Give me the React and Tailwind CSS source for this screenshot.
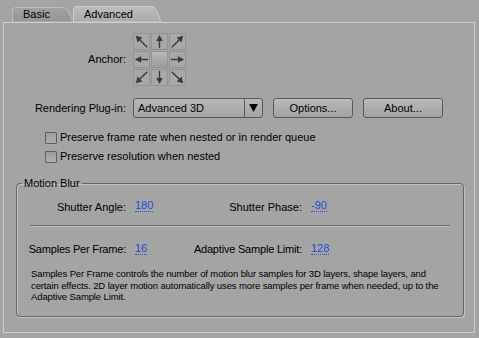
import React from "react";

function Arrow({ rot }) {
  return (
    <svg width="17" height="17" viewBox="0 0 17 17" style={{ transform: `rotate(${rot}deg)` }}>
      <line x1="8.5" y1="16" x2="8.5" y2="5" stroke="#3a3a3a" strokeWidth="1.6" />
      <polygon points="4.8,8 8.5,1 12.2,8" fill="#3a3a3a" />
    </svg>
  );
}

function DiagArrow({ rot }) {
  return (
    <svg width="17" height="17" viewBox="0 0 17 17" style={{ transform: `rotate(${rot}deg)` }}>
      <line x1="2" y1="15" x2="12" y2="5" stroke="#3a3a3a" strokeWidth="1.6" />
      <polygon points="15,2 7.5,4 13,9.5" fill="#3a3a3a" />
    </svg>
  );
}

function Cell({ children, center }) {
  return (
    <div
      className={
        "w-[17px] h-[17px] border border-[#939393] flex items-center justify-center overflow-hidden " +
        (center ? "bg-gradient-to-b from-[#b8b8b8] to-[#9c9c9c]" : "bg-[#a8a8a8]")
      }
    >
      {children}
    </div>
  );
}

function Value({ children }) {
  return (
    <span className="text-[#1f4fd0] border-b border-dotted border-[#1f4fd0] leading-[11px] inline-block">
      {children}
    </span>
  );
}

function Checkbox({ label }) {
  return (
    <div className="flex items-center h-[19px] pl-[41px]">
      <div className="w-[12px] h-[12px] border border-[#5f5f5f] rounded-[1px] bg-gradient-to-b from-[#9c9c9c] to-[#b0b0b0]" />
      <span className="ml-[3px] leading-[13px]">{label}</span>
    </div>
  );
}

function Button({ children, w }) {
  return (
    <div
      className={
        "h-[20px] rounded-[3px] border border-[#5a5a5a] bg-gradient-to-b from-[#bababa] to-[#a2a2a2] flex items-center justify-center leading-[13px] " +
        w
      }
    >
      {children}
    </div>
  );
}

export default function App() {
  return (
    <div className="w-[479px] h-[338px] bg-[#a4a4a4] text-black text-[11px] font-['Liberation_Sans',sans-serif] overflow-hidden">
      {/* tabs */}
      <div className="flex h-[22px] pl-[12px] items-end">
        <div className="relative w-[62px] h-[15px]">
          <svg className="absolute inset-0" width="62" height="15" viewBox="0 0 62 15">
            <defs>
              <linearGradient id="gb" x1="0" y1="0" x2="0" y2="1">
                <stop offset="0" stopColor="#a2a2a2" />
                <stop offset="1" stopColor="#959595" />
              </linearGradient>
            </defs>
            <path d="M0.5,15 V3.5 Q0.5,0.5 3.5,0.5 H50 C55,0.5 56,3 58,8 C59.5,12 60.5,15 62,15 Z" fill="url(#gb)" stroke="#bdbdbd" strokeWidth="1" />
          </svg>
          <span className="relative block pl-[11px] pt-[1px] leading-[13px]">Basic</span>
        </div>
        <div className="relative w-[88px] h-[16px] ml-[-1px]">
          <svg className="absolute inset-0" width="88" height="16" viewBox="0 0 88 16">
            <defs>
              <linearGradient id="ga" x1="0" y1="0" x2="0" y2="1">
                <stop offset="0" stopColor="#bdbdbd" />
                <stop offset="1" stopColor="#aaaaaa" />
              </linearGradient>
            </defs>
            <path d="M0.5,16 V3.5 Q0.5,0.5 3.5,0.5 H77 C82,0.5 83,3 85,8 C86.5,12 87,15 88,16 Z" fill="url(#ga)" stroke="#cfcfcf" strokeWidth="1" />
          </svg>
          <span className="relative block pl-[11px] pt-[2px] leading-[13px]">Advanced</span>
        </div>
      </div>

      {/* panel */}
      <div className="ml-[3px] w-[472px] h-[311px] border border-[#cdcdcd] flex flex-col">
        {/* anchor */}
        <div className="flex items-center mt-[10px]">
          <div className="w-[122px] text-right leading-[13px]">Anchor:</div>
          <div className="ml-[7px] grid grid-cols-3 gap-[1px]">
            <Cell><DiagArrow rot={-90} /></Cell>
            <Cell><Arrow rot={0} /></Cell>
            <Cell><DiagArrow rot={0} /></Cell>
            <Cell><Arrow rot={-90} /></Cell>
            <Cell center />
            <Cell><Arrow rot={90} /></Cell>
            <Cell><DiagArrow rot={180} /></Cell>
            <Cell><Arrow rot={180} /></Cell>
            <Cell><DiagArrow rot={90} /></Cell>
          </div>
        </div>

        {/* rendering plugin */}
        <div className="flex items-center mt-[12px]">
          <div className="w-[122px] text-right leading-[13px]">Rendering Plug-in:</div>
          <div className="ml-[7px] w-[130px] h-[20px] rounded-[3px] border border-[#5a5a5a] bg-gradient-to-b from-[#b8b8b8] to-[#a4a4a4] flex items-stretch">
            <div className="flex-1 flex items-center pl-[4px] leading-[13px]">Advanced 3D</div>
            <div className="w-[18px] border-l border-[#5a5a5a] flex items-center justify-center">
              <svg width="9" height="8" viewBox="0 0 9 8"><polygon points="0,0 9,0 4.5,8" fill="#000" /></svg>
            </div>
          </div>
          <Button w="w-[80px] ml-[10px]">Options...</Button>
          <Button w="w-[80px] ml-[10px]">About...</Button>
        </div>

        {/* checkboxes */}
        <div className="mt-[10px] flex flex-col">
          <Checkbox label="Preserve frame rate when nested or in render queue" />
          <Checkbox label="Preserve resolution when nested" />
        </div>

        {/* motion blur */}
        <fieldset className="mt-[11px] ml-[12px] mr-[10px] min-w-0 h-[140px] border border-[#676767] rounded-[4px] shadow-[inset_1px_1px_0_#c2c2c2,1px_1px_0_#c2c2c2] overflow-hidden">
          <legend className="ml-[5px] px-[2px] leading-[13px]">Motion Blur</legend>
          <div className="flex items-end mt-[7px]">
            <div className="w-[109px] text-right leading-[13px]">Shutter Angle:</div>
            <div className="ml-[9px] w-[25px]"><Value>180</Value></div>
            <div className="w-[142px] text-right leading-[13px]">Shutter Phase:</div>
            <div className="ml-[9px]"><Value>-90</Value></div>
          </div>
          <div className="mx-[13px] mt-[11px] h-[2px] border-t border-[#6a6a6a] border-b border-b-[#c0c0c0]" />
          <div className="flex items-end mt-[13px]">
            <div className="w-[109px] text-right leading-[13px] tracking-[-0.2px]">Samples Per Frame:</div>
            <div className="ml-[9px] w-[25px]"><Value>16</Value></div>
            <div className="w-[142px] text-right leading-[13px] tracking-[-0.2px]">Adaptive Sample Limit:</div>
            <div className="ml-[9px]"><Value>128</Value></div>
          </div>
          <p className="mt-[12px] pl-[14px] text-[9.5px] tracking-[-0.12px] leading-[11.5px] whitespace-nowrap">
            Samples Per Frame controls the number of motion blur samples for 3D layers, shape layers, and
            <br />
            certain effects. 2D layer motion automatically uses more samples per frame when needed, up to the
            <br />
            Adaptive Sample Limit.
          </p>
        </fieldset>
      </div>
    </div>
  );
}
